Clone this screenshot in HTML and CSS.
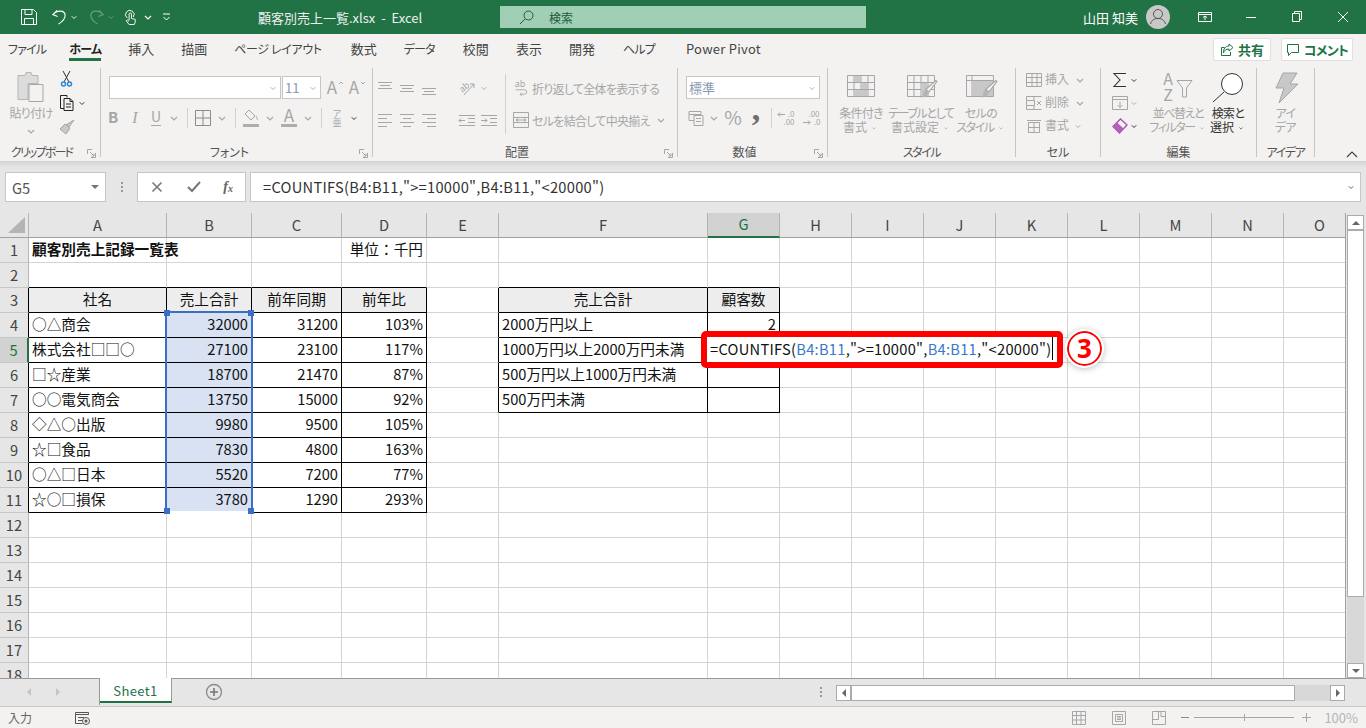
FILE: index.html
```html
<!DOCTYPE html>
<html lang="ja">
<head>
  <meta charset="UTF-8" />
  <title>顧客別売上一覧.xlsx - Excel</title>
  <link rel="stylesheet" href="styles.css">
</head>
<body>
  <svg class="sprite">
    <symbol id="chev" viewBox="0 0 16 22"><path d="M5 10l3 3 3-3" fill="none" stroke="currentColor" stroke-width="1.2"/></symbol>
    <symbol id="brush" viewBox="0 0 16 18"><path d="M14 1l1 1-7 9-3-2z" fill="#f3f2f1" stroke="#a6a6a6"/><path d="M5 9l3 2c0 3-3 5-7 5 2-1 2-3 2-5z" fill="#b5b5b5"/></symbol>
    <symbol id="launch" viewBox="0 0 9 9"><path d="M.5 5V.5H5M8.500 4v4.500H4M3 3l4 4M7 4.500V7H4.500" fill="none" stroke="#a6a6a6"/></symbol>
  </svg>

  <div class="titlebar">
    <div class="qat">
      <svg class="ico16" viewBox="0 0 16 16"><path d="M.5.500h12l3 3v12H.5zM4 .5v5h7v-5M3.500 15.500v-6h9v6" fill="none" stroke="#fff"/></svg>
      <svg class="ico16 undo" viewBox="0 0 16 17"><path d="M6 1.500L1.500 6l5 2M1.500 6C6 1 14 1 14.500 6.500c.3 4-3 7-7 9.500" fill="none" stroke="#fff" stroke-width="1.200"/></svg>
      <svg class="chev narrow white"><use href="#chev"/></svg>
      <svg class="ico16 redo" viewBox="0 0 16 17"><path d="M10 1.500L14.500 6l-5 2M14.500 6C10 1 2 1 1.500 6.500c-.3 4 3 7 7 9.500" fill="none" stroke="#6c9f84" stroke-width="1.200"/></svg>
      <svg class="chev narrow faded"><use href="#chev"/></svg>
      <svg class="ico16 touch" viewBox="0 0 13 17"><path d="M3 9.500a4.500 4.500 0 1 1 6.500-1M5 12V5.500a1.200 1.200 0 0 1 2.500 0V10l4 1v3l-1 2.500H5L2 12.500l1-1 2 1.500" fill="none" stroke="#fff"/></svg>
      <svg class="chev white gap6"><use href="#chev"/></svg>
      <svg class="custom" viewBox="0 0 10 10"><path d="M1 2h7M1.500 5l3 3 3-3" fill="none" stroke="#fff"/></svg>
    </div>
    <div class="doc-title">顧客別売上一覧.xlsx&nbsp; -&nbsp; Excel</div>
    <div class="search">
      <svg class="search-ico" viewBox="0 0 15 15"><circle cx="9.500" cy="5.500" r="4.500" fill="none" stroke="#1d5b39"/><path d="M6 9l-5 5" stroke="#1d5b39" fill="none"/></svg>
      <span>検索</span>
    </div>
    <div class="account">
      <span class="user">山田 知美</span>
      <svg class="avatar" viewBox="0 0 24 24"><circle cx="12" cy="12" r="12" fill="#c8c8c8"/><circle cx="12" cy="9" r="4.500" fill="none" stroke="#555"/><path d="M4.500 19c1-4 4-5.500 7.500-5.500s6.500 1.500 7.500 5.500" fill="none" stroke="#555"/></svg>
    </div>
    <div class="win-btn"><svg class="ico14" viewBox="0 0 14 12"><path d="M.5 1.500h13v9H.5zM.5 3.500h13M7 9V5M5 6.500L7 5l2 1.500" fill="none" stroke="#fff"/></svg></div>
    <div class="win-btn"><svg class="ico14" viewBox="0 0 14 12"><path d="M2 6.500h10" stroke="#fff"/></svg></div>
    <div class="win-btn"><svg class="ico14" viewBox="0 0 14 12"><path d="M2.500 2.500h7v8h-7zM4.500 2.500v-2h7v8h-2" fill="none" stroke="#fff"/></svg></div>
    <div class="win-btn"><svg class="ico14" viewBox="0 0 14 12"><path d="M2 1l10 10M12 1L2 11" stroke="#fff" fill="none"/></svg></div>
  </div>

  <div class="tabs">
    <span class="tab kana first">ファイル</span>
    <span class="tab kana active">ホーム</span>
    <span class="tab">挿入</span>
    <span class="tab">描画</span>
    <span class="tab kana page">ページ レイアウト</span>
    <span class="tab">数式</span>
    <span class="tab kana data">データ</span>
    <span class="tab">校閲</span>
    <span class="tab">表示</span>
    <span class="tab dev">開発</span>
    <span class="tab kana help">ヘルプ</span>
    <span class="tab latin">Power Pivot</span>
    <div class="tab-actions">
      <button class="pill share"><svg class="ico14" viewBox="0 0 14 14"><path d="M9 1l4 3.500L9 8V6C6 6 4 7.500 3.500 10 3 6 5.500 3 9 3zM10.500 9v3.500h-9v-8h3" fill="none" stroke="#217346"/></svg>共有</button>
      <button class="pill comment"><svg class="ico14" viewBox="0 0 14 14"><path d="M1.500 1.500h11v8h-7l-3 3v-3h-1z" fill="none" stroke="#217346"/></svg><span class="t1">コメント</span></button>
    </div>
  </div>

  <div class="ribbon">
    <section class="group g-clip">
      <div class="body">
        <div class="big w52">
          <svg class="icon-big" viewBox="0 0 30 32"><path d="M2 3.500h7l1-3h5l1 3h6v8H12v16H2z" fill="#dcdcdc" stroke="#b5b5b5"/><path d="M13 12.500h14v17H13z" fill="#f3f2f1" stroke="#a6a6a6"/></svg>
          <span class="t1">貼り付け</span>
          <svg class="chev"><use href="#chev"/></svg>
        </div>
        <div class="stack">
          <div class="row"><svg class="ico18" viewBox="0 0 18 18"><path d="M5 1l6 11M12 1L6 12" stroke="#333" fill="none"/><circle cx="5.500" cy="14" r="2" fill="none" stroke="#2b88d8" stroke-width="1.500"/><circle cx="11.500" cy="14" r="2" fill="none" stroke="#2b88d8" stroke-width="1.500"/></svg></div>
          <div class="row"><svg class="ico18" viewBox="0 0 18 18"><path d="M6 14.500H2.500V1.500H9v2M6 4.500h6l3 3v9H6z M12 4.500v3h3M8 10h5M8 13h5" fill="none" stroke="#222"/></svg><svg class="chev narrow dark"><use href="#chev"/></svg></div>
          <div class="row"><svg class="ico18" viewBox="0 0 18 18"><path d="M16 2l-5 7-3-2z" fill="#c8c8c8" stroke="#a6a6a6"/><path d="M7 6l5 4-4 6-6-5z" fill="#c8c8c8" stroke="#a6a6a6"/></svg></div>
        </div>
      </div>
      <div class="label pad-17"><span class="t3">クリップボード</span><svg class="launcher"><use href="#launch"/></svg></div>
    </section>

    <section class="group g-font">
      <div class="body col">
        <div class="fields">
          <div class="combo name"><svg class="chev narrow"><use href="#chev"/></svg></div>
          <div class="combo size"><span class="muted-num">11</span><svg class="chev narrow"><use href="#chev"/></svg></div>
          <svg class="w22 grow-a" viewBox="0 0 22 22"><text x="9" y="17" class="glyph g15">A</text><path d="M16 7l2-2 2 2" fill="none" stroke="#a6a6a6"/></svg>
          <svg class="w22" viewBox="0 0 22 22"><text x="9" y="17" class="glyph g15">A</text><path d="M16 5l2 2 2-2" fill="none" stroke="#a6a6a6"/></svg>
        </div>
        <div class="tools">
          <svg class="w22" viewBox="0 0 22 22"><text x="11" y="16" class="glyph bold">B</text></svg>
          <svg class="w22" viewBox="0 0 22 22"><text x="11" y="16" class="glyph ital">I</text></svg>
          <svg class="w20" viewBox="0 0 20 22"><text x="10" y="15" class="glyph">U</text><path d="M5 18.500h10" stroke="#a6a6a6"/></svg>
          <svg class="chev"><use href="#chev"/></svg>
          <i class="sep"></i>
          <svg class="w22 sp" viewBox="0 0 22 22"><path d="M3.500 3.500h15v15h-15zM11 3.500v15M3.500 11h15" fill="none" stroke="#8c8c8c"/></svg>
          <svg class="chev"><use href="#chev"/></svg>
          <i class="sep"></i>
          <svg class="w22 sp" viewBox="0 0 22 22"><path d="M9 3l6 6-4 4-6-6zM16 9c1 2 2 3 1 4" fill="none" stroke="#a6a6a6"/><path d="M3 17h16v3H3z" fill="#b0aca8"/></svg>
          <svg class="chev"><use href="#chev"/></svg>
          <svg class="w22" viewBox="0 0 22 22"><text x="11" y="15" class="glyph g15">A</text><path d="M3 17h16v3H3z" fill="#b0aca8"/></svg>
          <svg class="chev"><use href="#chev"/></svg>
          <i class="sep"></i>
          <svg class="w22 sp" viewBox="0 0 22 22"><text x="11" y="10" class="glyph g9">ア</text><text x="11" y="19" class="glyph g9">亜</text></svg>
          <svg class="chev narrow dark"><use href="#chev"/></svg>
        </div>
      </div>
      <div class="label pad-14">フォント<svg class="launcher"><use href="#launch"/></svg></div>
    </section>

    <section class="group g-align">
      <div class="body">
        <div class="align-left">
          <div class="tools tall">
            <svg class="w22" viewBox="0 0 22 22"><path d="M4 5.500h14M6 8.500h10M4 11.500h14" stroke="#a6a6a6"/></svg>
            <svg class="w22" viewBox="0 0 22 22"><path d="M4 8.500h14M6 11.500h10M4 14.500h14" stroke="#a6a6a6"/></svg>
            <svg class="w22" viewBox="0 0 22 22"><path d="M4 11.500h14M6 14.500h10M4 17.500h14" stroke="#a6a6a6"/></svg>
            <svg class="w20 sp-18" viewBox="0 0 20 22"><text x="7" y="13" class="glyph g9" transform="rotate(-40 7 11)">ab</text><path d="M6 18L16 7M12 7h4v4" fill="none" stroke="#a6a6a6"/></svg>
            <svg class="chev narrow"><use href="#chev"/></svg>
          </div>
          <div class="tools tall">
            <svg class="w22" viewBox="0 0 22 22"><path d="M4 5.500h14M4 9.500h9M4 13.500h14M4 17.500h9" stroke="#a6a6a6"/></svg>
            <svg class="w22" viewBox="0 0 22 22"><path d="M4 5.500h14M7 9.500h8M4 13.500h14M7 17.500h8" stroke="#a6a6a6"/></svg>
            <svg class="w22" viewBox="0 0 22 22"><path d="M4 5.500h14M9 9.500h9M4 13.500h14M9 17.500h9" stroke="#a6a6a6"/></svg>
            <svg class="w22 sp-16" viewBox="0 0 22 22"><path d="M3 6.500h16M3 16.500h16M12 9.500h7M12 13.500h7M9 11.500H3M5 9.500l-2 2 2 2" fill="none" stroke="#a6a6a6"/></svg>
            <svg class="w22" viewBox="0 0 22 22"><path d="M3 6.500h16M3 16.500h16M12 9.500h7M12 13.500h7M3 11.500h6M7 9.500l2 2-2 2" fill="none" stroke="#a6a6a6"/></svg>
          </div>
        </div>
        <i class="sep long"></i>
        <div class="align-right">
          <div class="text-tool"><svg class="ico16" viewBox="0 0 16 18"><text x="1" y="8" class="glyph-l g10">ab</text><path d="M2 11h10a2.500 2.500 0 0 1 0 5H7M9 14l-2 2 2 2" fill="none" stroke="#a6a6a6"/></svg><span class="t1">折り返して全体を表示する</span></div>
          <div class="text-tool"><svg class="ico16" viewBox="0 0 16 16"><path d="M.5.500h15v15H.5zM.5 5.500h15M.5 10.500h15M3 8h10M5 6.500L3 8l2 1.500M11 6.500L13 8l-2 1.500" fill="none" stroke="#a6a6a6"/></svg><span class="t1">セルを結合して中央揃え</span><svg class="chev"><use href="#chev"/></svg></div>
        </div>
      </div>
      <div class="label pad-16">配置<svg class="launcher"><use href="#launch"/></svg></div>
    </section>

    <section class="group g-num">
      <div class="body col">
        <div class="fields"><div class="combo number"><span class="muted-num">標準</span><svg class="chev narrow"><use href="#chev"/></svg></div></div>
        <div class="tools">
          <svg class="w20" viewBox="0 0 20 22"><path d="M3 4.500h12v3H3zM8 8.500h9v10H8zM10 11.500h5M10 14.500h5M3 7.500v6h5" fill="none" stroke="#a6a6a6"/></svg>
          <svg class="chev"><use href="#chev"/></svg>
          <svg class="w22" viewBox="0 0 22 22"><text x="11" y="18" class="glyph g19">%</text></svg>
          <svg class="w22" viewBox="0 0 22 22"><text x="12" y="13" class="glyph comma">,</text></svg>
          <i class="sep"></i>
          <svg class="w22" viewBox="0 0 22 22"><path d="M2 7.500h7M4 5.500l-2 2 2 2" fill="none" stroke="#a6a6a6"/><text x="15" y="10" class="glyph g8">.0</text><text x="13" y="18" class="glyph g8">.00</text></svg>
          <svg class="w22 sp-3" viewBox="0 0 22 22"><text x="13" y="10" class="glyph g8">.00</text><path d="M2 15.500h7M7 13.500l2 2-2 2" fill="none" stroke="#a6a6a6"/><text x="16" y="18" class="glyph g8">.0</text></svg>
        </div>
      </div>
      <div class="label pad-16">数値<svg class="launcher"><use href="#launch"/></svg></div>
    </section>

    <section class="group g-style">
      <div class="body">
        <div class="big w66">
          <svg class="icon-big" viewBox="0 0 30 32"><path d="M1.500 3.500h27v21h-27zM1.500 10.500h27M1.500 17.500h27M8 3.500v21M15 3.500v21M22 3.500v21" fill="none" stroke="#a6a6a6"/><path d="M8 4h7v6H8zM15 11h7v6h-7zM8 18h14v6H8z" fill="#c8c8c8"/></svg>
          <span class="t1">条件付き</span>
          <span>書式<svg class="chev-in"><use href="#chev"/></svg></span>
        </div>
        <div class="big w54">
          <svg class="icon-big wide" viewBox="0 0 34 32"><path d="M3.500 3.500h27v21h-27zM3.500 10.500h27M3.500 17.500h27M10 3.500v21M17 3.500v21M24 3.500v21" fill="none" stroke="#a6a6a6"/><path d="M17 11h7v13h-7z" fill="#c8c8c8"/><svg x="16" y="7" width="18" height="21"><use href="#brush"/></svg></svg>
          <span class="t2">テーブルとして</span>
          <span>書式設定<svg class="chev-in"><use href="#chev"/></svg></span>
        </div>
        <div class="big w66">
          <svg class="icon-big wide" viewBox="0 0 34 32"><path d="M2.500 3.500h27v21h-27zM2.500 8.500h27M8 3.500v21" fill="none" stroke="#a6a6a6"/><path d="M8 9h21v15H8z" fill="#c8c8c8"/><svg x="16" y="7" width="18" height="21"><use href="#brush"/></svg></svg>
          <span class="t1">セルの</span>
          <span class="t2">スタイル<svg class="chev-in"><use href="#chev"/></svg></span>
        </div>
      </div>
      <div class="label"><span class="t2">スタイル</span></div>
    </section>

    <section class="group g-cell">
      <div class="body">
        <div class="stack cells">
          <div class="row"><svg class="ico16" viewBox="0 0 16 14"><path d="M.5.500h15v13H.5zM.5 4.500h15M.5 9.500h15M6 .5v13M11 .5v13" fill="none" stroke="#a6a6a6"/></svg><span>挿入</span><svg class="chev"><use href="#chev"/></svg></div>
          <div class="row"><svg class="ico16" viewBox="0 0 16 14"><path d="M.5.500h15M.5 13.500h15M.5 4.500h8v5h-8zM.5.500v4M.5 9.500v4M8 .5v4M8 9.500v4M11 5l4 4M15 5l-4 4" fill="none" stroke="#a6a6a6"/></svg><span>削除</span><svg class="chev"><use href="#chev"/></svg></div>
          <div class="row"><svg class="ico16" viewBox="0 0 16 14"><path d="M2.500 3.500h11v10h-11zM2.500 8.500h11M8 3.500v10M1 1.500h14" fill="none" stroke="#a6a6a6"/></svg><span>書式</span><svg class="chev narrow"><use href="#chev"/></svg></div>
        </div>
      </div>
      <div class="label">セル</div>
    </section>

    <section class="group g-edit">
      <div class="body">
        <div class="stack edits">
          <div class="row"><svg class="ico16" viewBox="0 0 16 16"><path d="M14 1.500H2L8 8l-6 6.500h12" fill="none" stroke="#333" stroke-width="1.100"/></svg><svg class="chev narrow dark"><use href="#chev"/></svg></div>
          <div class="row"><svg class="ico16" viewBox="0 0 16 16"><path d="M.5 1.500h15v13H.5zM.5 4.500h15M8 6.500v6M5.500 10L8 12.500l2.500-2.500" fill="none" stroke="#a6a6a6"/></svg><svg class="chev narrow"><use href="#chev"/></svg></div>
          <div class="row"><svg class="ico16" viewBox="0 0 16 16"><path d="M1 8.500L8.500 1 15 7l-7.500 8z" fill="#f3f2f1" stroke="#a64fb0" stroke-width="1.300"/><path d="M1 8.500l4-4 6.500 6-4 4.500z" fill="#b55fbd"/></svg><svg class="chev narrow dark"><use href="#chev"/></svg></div>
        </div>
        <div class="big w50">
          <svg class="icon-big wide" viewBox="0 0 34 32"><text x="7" y="13" class="glyph g14">A</text><text x="7" y="29" class="glyph g14">Z</text><path d="M16 8.500h15L25.500 16v9h-4v-9z" fill="none" stroke="#a6a6a6"/></svg>
          <span class="t2">並べ替えと</span>
          <span class="t2">フィルター<svg class="chev-in"><use href="#chev"/></svg></span>
        </div>
        <div class="big w50 on">
          <svg class="icon-big wide" viewBox="0 0 34 32"><circle cx="21" cy="12" r="10.500" fill="#fff" stroke="#333"/><path d="M13 20L2 30" stroke="#333" fill="none"/></svg>
          <span class="t1">検索と</span>
          <span>選択<svg class="chev-in"><use href="#chev"/></svg></span>
        </div>
      </div>
      <div class="label">編集</div>
    </section>

    <section class="group g-idea">
      <div class="body">
        <div class="big w57">
          <svg class="icon-big" viewBox="0 0 30 32"><path d="M12 1h14l-7 11h8L8 31l5-15H5z" fill="#c8c8c8" stroke="#a6a6a6"/></svg>
          <span class="t1">アイ</span>
          <span class="t1">デア</span>
        </div>
      </div>
      <div class="label"><span class="t2">アイデア</span></div>
    </section>
    <svg class="collapse" viewBox="0 0 14 8"><path d="M2 7l5-5 5 5" fill="none" stroke="#444" stroke-width="1.200"/></svg>
  </div>

  <div class="formula">
    <div class="namebox"><span>G5</span><i class="caret"></i></div>
    <div class="grip"><i></i><i></i><i></i></div>
    <div class="fx-btns">
      <svg class="ico14" viewBox="0 0 14 14"><path d="M2.500 2.500l9 9M11.500 2.500l-9 9" stroke="#777" stroke-width="1.600" fill="none"/></svg>
      <svg class="ico14" viewBox="0 0 14 14"><path d="M1 7l4 4 8-9" stroke="#777" stroke-width="2" fill="none"/></svg>
      <span class="fx">f<sub>x</sub></span>
    </div>
    <div class="fx-input"><span>=COUNTIFS(B4:B11,"&gt;=10000",B4:B11,"&lt;20000")</span><svg class="chev narrow dark-grey"><use href="#chev"/></svg></div>
  </div>

  <div class="workarea">
    <div class="sheet">
      <table class="grid">
        <colgroup><col class="c-h"><col class="c-a"><col class="c-b"><col class="c-c"><col class="c-d"><col class="c-n"><col class="c-f"><col class="c-n"><col class="c-n"><col class="c-n"><col class="c-n"><col class="c-n"><col class="c-n"><col class="c-n"><col class="c-n"><col class="c-n"></colgroup>
        <thead>
          <tr><th class="corner"><i></i></th><th>A</th><th>B</th><th>C</th><th>D</th><th>E</th><th>F</th><th class="on">G</th><th>H</th><th>I</th><th>J</th><th>K</th><th>L</th><th>M</th><th>N</th><th>O</th></tr>
        </thead>
        <tbody>
          <tr><th>1</th><td class="bold">顧客別売上記録一覧表</td><td></td><td></td><td class="num">単位：千円</td><td></td><td></td><td></td><td></td><td></td><td></td><td></td><td></td><td></td><td></td><td></td></tr>
          <tr><th>2</th><td class="kb"></td><td class="kb"></td><td class="kb"></td><td class="kb"></td><td></td><td class="kb"></td><td class="kb"></td><td></td><td></td><td></td><td></td><td></td><td></td><td></td><td></td></tr>
          <tr><th class="kr">3</th><td class="k head">社名</td><td class="k head">売上合計</td><td class="k head">前年同期</td><td class="k head">前年比</td><td class="kr"></td><td class="k head">売上合計</td><td class="k head">顧客数</td><td></td><td></td><td></td><td></td><td></td><td></td><td></td><td></td></tr>
          <tr><th class="kr">4</th><td class="k">○△商会</td><td class="k num sel">32000</td><td class="k num">31200</td><td class="k num">103%</td><td class="kr"></td><td class="k">2000万円以上</td><td class="k num">2</td><td></td><td></td><td></td><td></td><td></td><td></td><td></td><td></td></tr>
          <tr><th class="on">5</th><td class="k">株式会社□□○</td><td class="k num sel">27100</td><td class="k num">23100</td><td class="k num">117%</td><td class="kr"></td><td class="k">1000万円以上2000万円未満</td><td class="k"></td><td></td><td></td><td></td><td></td><td></td><td></td><td></td><td></td></tr>
          <tr><th class="kr">6</th><td class="k">□☆産業</td><td class="k num sel">18700</td><td class="k num">21470</td><td class="k num">87%</td><td class="kr"></td><td class="k">500万円以上1000万円未満</td><td class="k"></td><td></td><td></td><td></td><td></td><td></td><td></td><td></td><td></td></tr>
          <tr><th class="kr">7</th><td class="k">○○電気商会</td><td class="k num sel">13750</td><td class="k num">15000</td><td class="k num">92%</td><td class="kr"></td><td class="k">500万円未満</td><td class="k"></td><td></td><td></td><td></td><td></td><td></td><td></td><td></td><td></td></tr>
          <tr><th class="kr">8</th><td class="k">◇△○出版</td><td class="k num sel">9980</td><td class="k num">9500</td><td class="k num">105%</td><td></td><td></td><td></td><td></td><td></td><td></td><td></td><td></td><td></td><td></td><td></td></tr>
          <tr><th class="kr">9</th><td class="k">☆□食品</td><td class="k num sel">7830</td><td class="k num">4800</td><td class="k num">163%</td><td></td><td></td><td></td><td></td><td></td><td></td><td></td><td></td><td></td><td></td><td></td></tr>
          <tr><th class="kr">10</th><td class="k">○△□日本</td><td class="k num sel">5520</td><td class="k num">7200</td><td class="k num">77%</td><td></td><td></td><td></td><td></td><td></td><td></td><td></td><td></td><td></td><td></td><td></td></tr>
          <tr><th class="kr">11</th><td class="k">☆○□損保</td><td class="k num sel">3780</td><td class="k num">1290</td><td class="k num">293%</td><td></td><td></td><td></td><td></td><td></td><td></td><td></td><td></td><td></td><td></td><td></td></tr>
          <tr><th>12</th><td></td><td></td><td></td><td></td><td></td><td></td><td></td><td></td><td></td><td></td><td></td><td></td><td></td><td></td><td></td></tr>
          <tr><th>13</th><td></td><td></td><td></td><td></td><td></td><td></td><td></td><td></td><td></td><td></td><td></td><td></td><td></td><td></td><td></td></tr>
          <tr><th>14</th><td></td><td></td><td></td><td></td><td></td><td></td><td></td><td></td><td></td><td></td><td></td><td></td><td></td><td></td><td></td></tr>
          <tr><th>15</th><td></td><td></td><td></td><td></td><td></td><td></td><td></td><td></td><td></td><td></td><td></td><td></td><td></td><td></td><td></td></tr>
          <tr><th>16</th><td></td><td></td><td></td><td></td><td></td><td></td><td></td><td></td><td></td><td></td><td></td><td></td><td></td><td></td><td></td></tr>
          <tr><th>17</th><td></td><td></td><td></td><td></td><td></td><td></td><td></td><td></td><td></td><td></td><td></td><td></td><td></td><td></td><td></td></tr>
          <tr><th>18</th><td></td><td></td><td></td><td></td><td></td><td></td><td></td><td></td><td></td><td></td><td></td><td></td><td></td><td></td><td></td></tr>
        </tbody>
      </table>
      <div class="selection"><i class="h tl"></i><i class="h tr"></i><i class="h bl"></i><i class="h br"></i></div>
      <div class="edit-cell"><span>=COUNTIFS(<span class="ref">B4:B11</span>,"&gt;=10000",<span class="ref">B4:B11</span>,"&lt;20000")</span><i class="cursor"></i></div>
      <div class="callout">3</div>
    </div>
    <div class="vscroll">
      <button class="sb-btn"><i class="tri up"></i></button>
      <div class="sb-thumb"></div>
      <div class="sb-track"></div>
      <button class="sb-btn"><i class="tri down"></i></button>
    </div>
  </div>

  <div class="sheetbar">
    <div class="nav"><i class="tri left pale"></i><i class="tri right pale"></i></div>
    <div class="sheet-tab">Sheet1</div>
    <svg class="add" viewBox="0 0 18 18"><circle cx="9" cy="9" r="7.500" fill="none" stroke="#8a8a8a" stroke-width="1.300"/><path d="M9 5v8M5 9h8" stroke="#777" stroke-width="1.600"/></svg>
    <div class="grip small"><i></i><i></i><i></i></div>
    <div class="hscroll">
      <button class="hs-btn"><i class="tri left"></i></button>
      <div class="hs-thumb"></div>
      <div class="hs-track"></div>
      <button class="hs-btn"><i class="tri right"></i></button>
    </div>
  </div>

  <div class="status">
    <span class="mode">入力</span>
    <svg class="macro" viewBox="0 0 15 14"><path d="M.5 1.500h13v2H.5zM.5 3.500v9h7M3 6.500h6M3 9.500h4" fill="none" stroke="#555"/><circle cx="11" cy="10" r="3.500" fill="none" stroke="#555"/><circle cx="11" cy="10" r="1.500" fill="#555"/></svg>
    <div class="views">
      <svg class="ico14" viewBox="0 0 14 14"><path d="M.5.500h13v13H.5zM.5 4.500h13M.5 9h13M4.500.5v13M9 .5v13" fill="none" stroke="#a6a6a6"/></svg>
      <svg class="ico14" viewBox="0 0 14 14"><path d="M.5.500h13v13H.5zM3.500 3.500h7v7h-7zM5 5.500h4M5 7h4M5 8.500h4" fill="none" stroke="#a6a6a6"/></svg>
      <svg class="ico14" viewBox="0 0 14 14"><path d="M.5.500h13v13H.5zM.5 8.500h6v-8M9 .5v5h4.500" fill="none" stroke="#a6a6a6"/></svg>
    </div>
    <div class="zoom">
      <i class="minus"></i>
      <div class="slider"><i></i></div>
      <i class="plus"></i>
      <span>100%</span>
    </div>
  </div>
</body>
</html>
```
FILE: styles.css
```css
* {
  box-sizing: border-box;
}
html, body {
  margin: 0;
  padding: 0;
}
body {
  width: 1366px;
  height: 728px;
  overflow: hidden;
  background-color: #f3f2f1;
  font-family: "Noto Sans CJK JP", "Noto Sans", sans-serif;
  font-feature-settings: "palt";
  font-size: 12px;
  color: #444;
}
svg {
  display: block;
  flex: none;
}
i {
  display: block;
  font-style: normal;
}
.sprite {
  width: 0;
  height: 0;
  position: absolute;
}
.t1 { letter-spacing: -0.7px; }
.t2 { letter-spacing: -1.4px; }
.t3 { letter-spacing: -1.8px; }

/* sizes shared by icons */
.ico14 { width: 14px; height: 14px; }
.ico16 { width: 16px; height: 16px; }
.ico18 { width: 18px; height: 18px; }
.w20 { width: 20px; height: 22px; }
.w22 { width: 22px; height: 22px; }
.chev { width: 16px; height: 22px; color: #a6a6a6; }
.chev.narrow { width: 12px; }
.chev.dark { color: #222; }
.chev.white { color: #fff; }
.chev.faded { color: #6c9f84; }
.chev.dark-grey { color: #555; }
.chev-in { display: inline-block; width: 10px; height: 12px; color: inherit; vertical-align: -2px; margin-left: 2px; }

/* glyphs inside icons */
.glyph { fill: #a6a6a6; font-size: 14px; text-anchor: middle; }
.glyph-l { fill: #a6a6a6; }
.glyph.bold { font-weight: 700; font-size: 15px; }
.glyph.ital { font-style: italic; font-family: "Liberation Serif", serif; font-size: 16px; }
.g8 { font-size: 8px; }
.g9 { font-size: 9px; }
.g10 { font-size: 10px; }
.g14 { font-size: 16px; }
.g15 { font-size: 17px; }
.g19 { font-size: 19px; }
.glyph.comma { font: 700 34px "Liberation Serif", serif; fill: #6e6e6e; }

/* title bar */
.titlebar {
  height: 34px;
  background-color: #217346;
  display: flex;
  align-items: center;
  color: #fff;
}
.qat {
  width: 258px;
  display: flex;
  align-items: center;
  padding-left: 21px;
}
.qat .undo { margin-left: 14px; }
.qat .chev.white.narrow { margin-left: 1px; }
.qat .redo { margin-left: 9px; }
.qat .touch { margin-left: 7px; width: 13px; }
.qat .gap6 { margin-left: 3px; }
.qat .custom { width: 10px; height: 10px; margin-left: 6px; }
.doc-title {
  width: 242px;
  font-size: 13px;
  color: #f0f0f0;
}
.search {
  width: 366px;
  height: 22px;
  background-color: #a0cfb5;
  display: flex;
  align-items: center;
  padding-left: 19px;
  color: #1d5b39;
  font-size: 12px;
}
.search-ico { width: 15px; height: 15px; margin-right: 15px; }
.account {
  margin-left: auto;
  display: flex;
  align-items: center;
  width: 99px;
  font-size: 13px;
}
.user { width: 63px; white-space: nowrap; }
.avatar { width: 24px; height: 24px; }
.win-btn {
  width: 46px;
  height: 34px;
  display: flex;
  align-items: center;
  justify-content: center;
}

/* ribbon tabs */
.tabs {
  height: 30px;
  display: flex;
  align-items: flex-start;
  padding-left: 8px;
  gap: 27px;
  font-size: 13px;
  color: #444;
}
.tab {
  height: 27px;
  line-height: 30px;
  white-space: nowrap;
}
.tab.kana {
  font-size: 12px;
  letter-spacing: -0.8px;
}
.tab.first { margin-right: -4px; }
.tab.active {
  font-weight: 700;
  color: #222;
  border-bottom: 3px solid #217346;
}
.tab.page {
  letter-spacing: -0.35px;
  margin-right: 2px;
}
.tab.data, .tab.dev { margin-right: 1px; }
.tab.help { margin-right: 4px; }
.tab.latin { letter-spacing: 0.25px; }
.tab-actions {
  margin-left: auto;
  display: flex;
  gap: 10px;
  padding: 4px 13px 0 0;
}
.pill {
  height: 23px;
  display: flex;
  align-items: center;
  justify-content: center;
  gap: 4px;
  background-color: #fff;
  border: 1px solid #e1dfdd;
  border-radius: 2px;
  color: #217346;
  font: 700 13px "Noto Sans CJK JP", sans-serif;
  font-feature-settings: "palt";
  padding: 0;
}
.pill.share { width: 58px; }
.pill.comment { width: 72px; }

/* ribbon */
.ribbon {
  height: 97px;
  display: flex;
  padding-top: 4px;
  color: #a6a6a6;
  position: relative;
}
.group {
  height: 89px;
  border-right: 1px solid #c8c6c4;
  display: flex;
  flex-direction: column;
  flex: none;
}
.g-clip { width: 101px; }
.g-font { width: 272px; }
.g-align { width: 305px; }
.g-num { width: 150px; }
.g-style { width: 188px; }
.g-cell { width: 85px; }
.g-edit { width: 156px; }
.g-idea { width: 58px; }
.body {
  height: 75px;
  display: flex;
}
.body.col { flex-direction: column; }
.label {
  height: 14px;
  line-height: 18px;
  text-align: center;
  color: #555;
  position: relative;
  white-space: nowrap;
}
.pad-14 { padding-right: 14px; }
.pad-16 { padding-right: 16px; }
.pad-17 { padding-right: 17px; }
.launcher {
  position: absolute;
  right: 4px;
  top: 6px;
  width: 9px;
  height: 9px;
}
.big {
  display: flex;
  flex-direction: column;
  align-items: center;
  padding-top: 4px;
  line-height: 14px;
  white-space: nowrap;
  flex: none;
}
.big.on { color: #333; }
.icon-big {
  width: 30px;
  height: 32px;
  margin-bottom: 2px;
}
.icon-big.wide { width: 34px; }
.w50 { width: 50px; }
.w52 { width: 52px; margin-left: 5px; }
.w54 { width: 54px; }
.w57 { width: 57px; }
.w66 { width: 66px; }
.stack {
  display: flex;
  flex-direction: column;
  gap: 2px;
}
.stack .row {
  height: 22px;
  display: flex;
  align-items: center;
}
.g-clip .stack { margin-left: 1px; }
.cells, .edits { gap: 0; }
.cells .row, .edits .row { height: 23px; }
.cells { margin-left: 10px; width: 72px; }
.cells .row span { margin: -2px 0 0 3px; width: 27px; }
.edits { margin-left: 11px; width: 41px; }
.fields {
  display: flex;
  margin: 8px 0 0 8px;
  height: 23px;
  align-items: center;
}
.combo {
  height: 23px;
  background-color: #fff;
  border: 1px solid #c6c6c6;
  display: flex;
  align-items: center;
  justify-content: space-between;
  font-size: 13px;
  padding: 0 1px 0 2px;
}
.combo.name { width: 172px; justify-content: flex-end; }
.combo.size { width: 39px; margin-left: 1px; }
.combo.number { width: 134px; }
.muted-num { color: #8a9ab0; }
.grow-a { margin-left: 2px; }
.tools {
  display: flex;
  align-items: center;
  height: 24px;
  margin: 7px 0 0 0;
}
.sep {
  width: 1px;
  height: 20px;
  background-color: #d2d0ce;
  margin: 0 4px 0 5px;
}
.sep.long {
  height: 60px;
  margin: 6px 0 0 0;
}
.g-font .tools { margin-left: 1px; }
.g-num .tools { margin-left: 8px; }
.sp-18 { margin-left: 18px; }
.sp-16 { margin-left: 16px; }
.sp-3 { margin-left: 3px; }
.align-left { width: 132px; padding-top: 8px; }
.align-left .tools { margin: 0 0 8px 1px; }
.align-right { padding: 8px 0 0 7px; }
.text-tool {
  height: 24px;
  margin-bottom: 8px;
  display: flex;
  align-items: center;
  gap: 3px;
  white-space: nowrap;
}
.collapse {
  position: absolute;
  right: 7px;
  bottom: 3px;
  width: 14px;
  height: 8px;
}

/* formula bar */
.formula {
  height: 52px;
  background: linear-gradient(#d4d4d4, #e6e6e6 7px);
  display: flex;
  padding: 11px 5px;
}
.namebox {
  width: 101px;
  background-color: #fff;
  border: 1px solid #c6c6c6;
  display: flex;
  align-items: center;
  justify-content: space-between;
  padding: 0 6px;
  font-size: 14.67px;
  color: #555;
}
.caret {
  border-left: 4px solid transparent;
  border-right: 4px solid transparent;
  border-top: 4px solid #777;
}
.grip {
  width: 31px;
  display: flex;
  flex-direction: column;
  align-items: center;
  justify-content: center;
  gap: 2px;
}
.grip i {
  width: 2px;
  height: 2px;
  background-color: #999;
}
.fx-btns {
  width: 109px;
  background-color: #fff;
  border: 1px solid #c6c6c6;
  display: flex;
  align-items: center;
  justify-content: space-between;
  padding: 0 12px;
}
.fx {
  font: italic 700 14px "Liberation Serif", serif;
  color: #666;
}
.fx sub { font-size: 10px; vertical-align: -1px; }
.fx-input {
  width: 1111px;
  margin-left: 4px;
  background-color: #fff;
  border: 1px solid #c6c6c6;
  display: flex;
  align-items: center;
  justify-content: space-between;
  padding: 0 3px 1px 12px;
  font-size: 14.67px;
  letter-spacing: 0.27px;
  color: #333;
  white-space: nowrap;
}

/* sheet */
.workarea {
  height: 465px;
  display: flex;
  background-color: #e6e6e6;
}
.sheet {
  width: 1346px;
  height: 465px;
  overflow: hidden;
  position: relative;
  background-color: #fff;
  border-right: 1px solid #a0a0a0;
}
.grid {
  width: 1356px;
  table-layout: fixed;
  border-collapse: separate;
  border-spacing: 0;
  font-size: 14.67px;
  color: #111;
  font-feature-settings: normal;
}
.c-h { width: 29px; }
.c-a { width: 138px; }
.c-b { width: 85px; }
.c-c { width: 90px; }
.c-d { width: 85px; }
.c-f { width: 209px; }
.c-n { width: 72px; }
.grid th, .grid td {
  height: 25px;
  border-right: 1px solid #d4d4d4;
  border-bottom: 1px solid #d4d4d4;
  white-space: nowrap;
  overflow: hidden;
}
.grid th {
  padding: 0 0 2px;
  background-color: #e6e6e6;
  font-weight: 400;
  color: #444;
  text-align: center;
  border-right-color: #b4b4b4;
  border-bottom-color: #c6c6c6;
}
.grid thead th {
  border-bottom-color: #a0a0a0;
  border-right-color: #b4b4b4;
}
.grid th.on {
  background-color: #d2d2d2;
  color: #217346;
}
.grid thead th.on { border-bottom: 2px solid #217346; }
.grid tbody th.on { border-right: 2px solid #217346; }
.grid th.kr { border-right-color: #000; }
.corner { position: relative; }
.corner i {
  position: absolute;
  left: 8px;
  top: 4px;
  width: 0;
  height: 0;
  border-left: 17px solid transparent;
  border-bottom: 16px solid #b4b4b4;
}
.grid td { padding: 0 3px 3px; }
.grid td.bold {
  font-weight: 700;
  overflow: visible;
}
.grid td.num { text-align: right; }
.grid td.head {
  background-color: #ededed;
  text-align: center;
}
.grid td.sel { background-color: #d8e2f3; }
.grid td.k {
  border-right-color: #000;
  border-bottom-color: #000;
}
.grid td.kb { border-bottom-color: #000; }
.grid td.kr { border-right-color: #000; }

.selection {
  position: absolute;
  left: 165px;
  top: 98px;
  width: 88px;
  height: 202px;
  border: 2px solid #3a6fc4;
  border-bottom-color: #fff;
}
.h {
  position: absolute;
  width: 6px;
  height: 6px;
  background-color: #3a6fc4;
  border: 1px solid #3a6fc4;
}
.tl { left: -3px; top: -3px; }
.tr { right: -3px; top: -3px; }
.bl { left: -3px; bottom: -3px; }
.br { right: -3px; bottom: -3px; }
.edit-cell {
  position: absolute;
  left: 701px;
  top: 118px;
  width: 362px;
  height: 37px;
  background-color: #fff;
  border: 6px solid #f00;
  border-radius: 5px;
  padding-left: 3px;
  line-height: 24px;
  font-size: 14.67px;
  letter-spacing: 0.27px;
  color: #111;
  white-space: nowrap;
  display: flex;
  font-feature-settings: normal;
}
.ref { color: #3a78c9; }
.cursor {
  width: 1px;
  height: 23px;
  background-color: #000;
  margin-left: 1px;
}
.callout {
  position: absolute;
  left: 1067px;
  top: 118px;
  width: 35px;
  height: 35px;
  border-radius: 50%;
  background-color: #fff;
  border: 2px solid #f00;
  outline: 2px solid #fff;
  box-shadow: 0 1px 6px 2px rgba(0, 0, 0, 0.25);
  color: #f00;
  font: 700 26px/30px "Noto Sans", sans-serif;
  text-align: center;
}

/* scroll bars */
.vscroll {
  width: 20px;
  display: flex;
  flex-direction: column;
  padding: 2px 2px 0 1px;
}
.sb-btn, .hs-btn {
  background-color: #fff;
  border: 1px solid #ababab;
  padding: 0;
  display: flex;
  align-items: center;
  justify-content: center;
}
.sb-btn { height: 15px; flex: none; }
.sb-thumb {
  height: 367px;
  background-color: #fff;
  border: 1px solid #ababab;
}
.sb-track {
  flex: 1;
  background-color: #d8d8d8;
}
.tri {
  width: 0;
  height: 0;
}
.tri.up { border: 4px solid transparent; border-top: 0; border-bottom: 4px solid #666; }
.tri.down { border: 4px solid transparent; border-bottom: 0; border-top: 4px solid #666; }
.tri.left { border: 4px solid transparent; border-left: 0; border-right: 4px solid #666; }
.tri.right { border: 4px solid transparent; border-right: 0; border-left: 4px solid #666; }
.tri.left.pale { border-right-color: #c4c4c4; }
.tri.right.pale { border-left-color: #c4c4c4; }

.sheetbar {
  height: 28px;
  background-color: #e6e6e6;
  border-top: 1px solid #9a9a9a;
  display: flex;
  align-items: flex-start;
}
.nav {
  width: 100px;
  height: 26px;
  padding-left: 27px;
  display: flex;
  align-items: center;
  gap: 25px;
  border-right: 1px solid #9a9a9a;
}
.sheet-tab {
  width: 72px;
  height: 25px;
  margin-top: -1px;
  background-color: #fff;
  border-right: 1px solid #9a9a9a;
  border-bottom: 2px solid #217346;
  color: #217346;
  font-size: 13px;
  letter-spacing: 0.4px;
  line-height: 25px;
  text-align: center;
}
.add {
  width: 18px;
  height: 18px;
  margin: 4px 0 0 33px;
}
.grip.small {
  width: 8px;
  height: 26px;
  margin-left: 594px;
}
.hscroll {
  margin: 6px 0 0 11px;
  width: 509px;
  height: 16px;
  display: flex;
}
.hs-btn { width: 15px; flex: none; }
.hs-thumb {
  width: 444px;
  background-color: #fff;
  border: 1px solid #ababab;
}
.hs-track {
  flex: 1;
  background-color: #d8d8d8;
}

/* status bar */
.status {
  height: 22px;
  border-top: 1px solid #c8c6c4;
  display: flex;
  align-items: center;
  padding-left: 8px;
  color: #666;
  font-size: 12px;
}
.mode { width: 67px; }
.macro { width: 15px; height: 14px; }
.views {
  margin-left: auto;
  display: flex;
  gap: 26px;
  margin-right: 15px;
}
.zoom {
  display: flex;
  align-items: center;
  padding-right: 8px;
  color: #b4b4b4;
  font-size: 13px;
}
.minus {
  width: 8px;
  height: 1px;
  background-color: #888;
}
.slider {
  width: 100px;
  height: 1px;
  margin: 0 8px 0 5px;
  background-color: #a6a6a6;
  position: relative;
}
.slider i {
  position: absolute;
  left: 50px;
  top: -3px;
  width: 1px;
  height: 7px;
  background-color: #a6a6a6;
}
.plus {
  width: 9px;
  height: 9px;
  margin-right: 13px;
  background:
    linear-gradient(#a6a6a6, #a6a6a6) center / 9px 1px no-repeat,
    linear-gradient(#a6a6a6, #a6a6a6) center / 1px 9px no-repeat;
}
```
